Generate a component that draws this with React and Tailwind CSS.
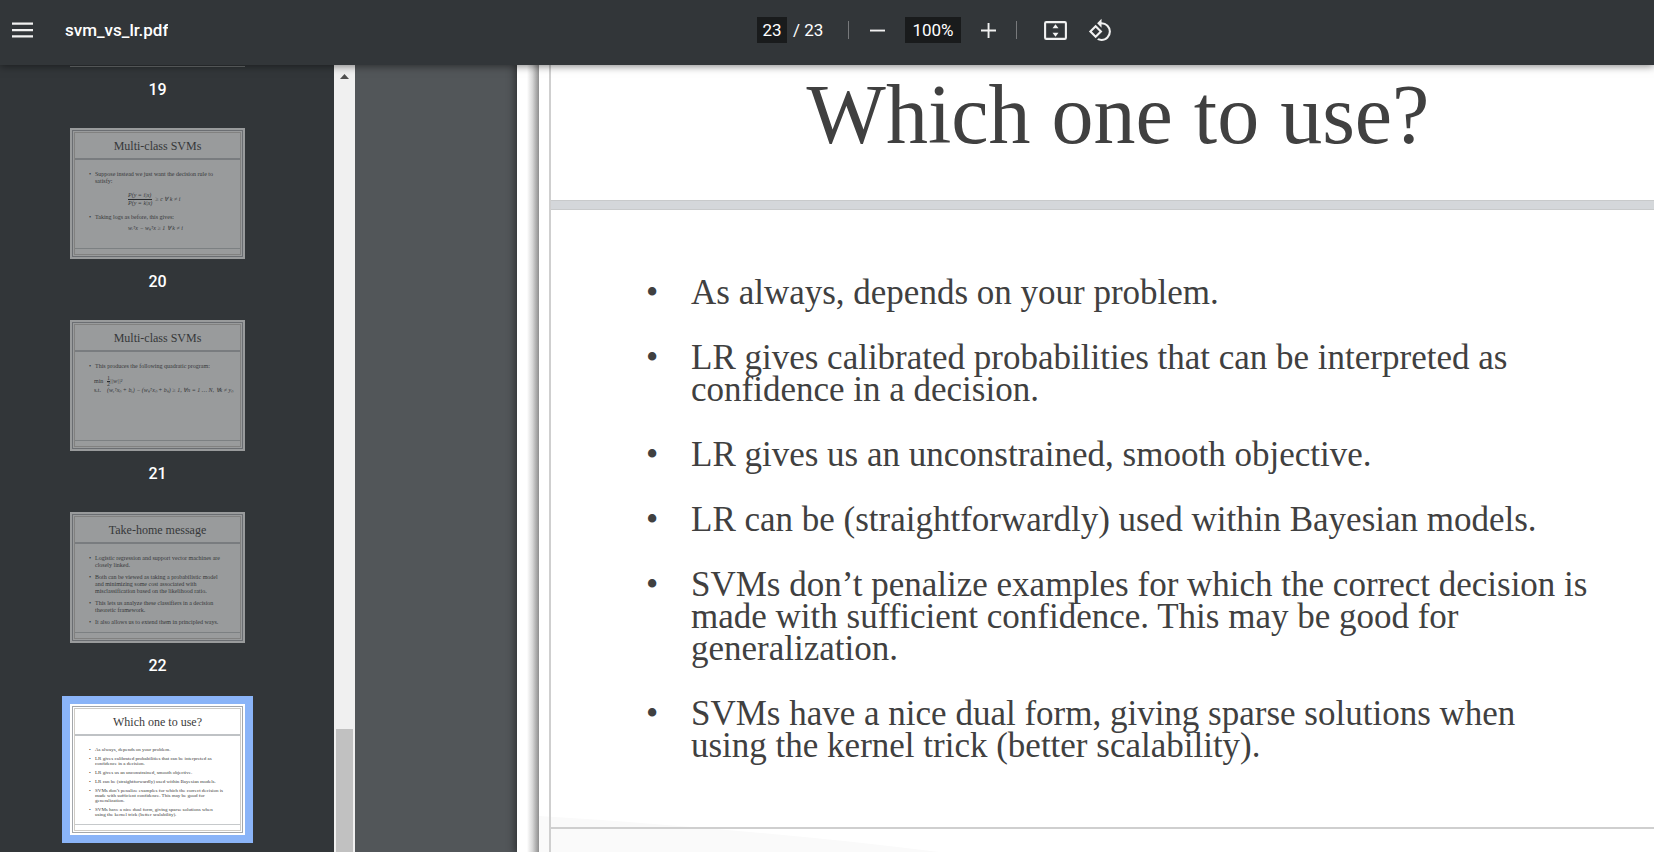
import React from "react";

const serif = "font-['Liberation_Serif',serif]";

function ToolButton({ label, children, className = "" }) {
  return (
    <button type="button" aria-label={label} className={`flex items-center justify-center text-[#f1f1f1] ${className}`}>
      {children}
    </button>
  );
}

function Separator() {
  return <span className="h-[18px] w-px shrink-0 bg-[#77797b]" />;
}

function Toolbar() {
  return (
    <header className="relative z-10 flex h-[65px] shrink-0 items-center bg-[#323639] pb-[5px] font-[Roboto,sans-serif] text-white shadow-[0_1px_8px_rgba(0,0,0,0.5)]">
      <div className="flex w-[757px] min-w-0 items-center gap-8 pl-3">
        <ToolButton label="Toggle sidebar" className="h-6 w-[21px]">
          <svg width="21" height="16" viewBox="0 0 21 16" fill="currentColor">
            <path d="M0 0.5h21v2.3H0zM0 6.9h21v2.3H0zM0 13.2h21v2.3H0z" />
          </svg>
        </ToolButton>
        <h1 className="truncate text-[17px] leading-6 font-medium">svm_vs_lr.pdf</h1>
      </div>
      <div className="flex shrink-0 items-center text-[17px] leading-[26px]">
        <input aria-label="Page number" defaultValue="23" className="h-[26px] w-[30px] bg-[#191b1c] text-center outline-none" />
        <span className="ml-[6px] w-[55px]">/ 23</span>
        <Separator />
        <ToolButton label="Zoom out" className="ml-[21px] h-6 w-[15px]">
          <svg width="15" height="15" viewBox="0 0 15 15" fill="currentColor">
            <path d="M0 6.6h15v1.9H0z" />
          </svg>
        </ToolButton>
        <input aria-label="Zoom level" defaultValue="100%" className="ml-5 h-[26px] w-14 bg-[#191b1c] text-center outline-none" />
        <ToolButton label="Zoom in" className="ml-5 h-6 w-[15px]">
          <svg width="15" height="15" viewBox="0 0 15 15" fill="currentColor">
            <path d="M0 6.6h6.6V0h1.9v6.6H15v1.9H8.5V15H6.6V8.5H0z" />
          </svg>
        </ToolButton>
        <span className="ml-5 flex">
          <Separator />
        </span>
        <ToolButton label="Fit to page" className="ml-[27px] h-6 w-[23px]">
          <svg width="23" height="19" viewBox="0 0 23 19" fill="none">
            <rect x="1.1" y="1.1" width="20.8" height="16.8" rx="1.2" stroke="currentColor" strokeWidth="2.1" />
            <path d="M11.5 3.2l3 4h-6zM11.5 15.8l3-4h-6z" fill="currentColor" />
          </svg>
        </ToolButton>
        <ToolButton label="Rotate counterclockwise" className="ml-[21px] h-6 w-6">
          <svg width="25" height="25" viewBox="0 0 24 24" fill="currentColor" className="shrink-0">
            <path d="M7.34 6.41L.86 12.9l6.49 6.48 6.49-6.48-6.5-6.49zM3.69 12.9l3.66-3.66L11 12.9l-3.66 3.66-3.65-3.66zm15.67-6.26A8.95 8.95 0 0 0 13 4V.76L8.76 5 13 9.24V6c1.79 0 3.58.68 4.95 2.05a7.007 7.007 0 0 1 0 9.9 6.973 6.973 0 0 1-7.79 1.44l-1.49 1.49C10.02 21.62 11.51 22 13 22c2.3 0 4.61-.88 6.36-2.64a8.98 8.98 0 0 0 0-12.72z" />
          </svg>
        </ToolButton>
      </div>
    </header>
  );
}

function Lines({ lines }) {
  return lines.map((line) => (
    <span key={line} className="block whitespace-nowrap">
      {line}
    </span>
  ));
}

function MiniBullet({ lines }) {
  return (
    <li className="flex">
      <span className="w-[6px] shrink-0">•</span>
      <span>
        <Lines lines={lines} />
      </span>
    </li>
  );
}

function Thumbnail({ title, number, selected = false, children }) {
  return (
    <button type="button" aria-label={`Page ${number}`} className={`block text-left ${selected ? "shadow-[0_0_0_8px_#8ab4f8]" : "opacity-50"}`}>
      <div className={`h-[131px] w-[175px] bg-white p-[2px] text-[#3a3a3a] ${serif}`}>
        <div className="h-full border border-[#a4a7ab] p-px">
          <div className="flex h-full flex-col overflow-hidden border border-[#cfccc6]">
            <div className="flex h-[27px] shrink-0 items-center justify-center border-b-2 border-[#bfc2c5] text-[12px] leading-[14px]">{title}</div>
            <div className={`flex-1 pt-[11px] pl-[14px] ${selected ? "text-[5px]" : "text-[6px]"}`}>{children}</div>
            <div className="h-[6px] shrink-0 border-t border-[#c6c9cb]" />
          </div>
        </div>
      </div>
    </button>
  );
}

function PageLabel({ children }) {
  return <p className="mt-[13px] mb-7 font-[Roboto,sans-serif] text-[16px] leading-5 font-medium text-white">{children}</p>;
}

function Sidebar() {
  return (
    <nav aria-label="Page thumbnails" className="flex w-[334px] shrink-0 flex-col items-start overflow-hidden bg-[#323639] pl-[70px]">
      <div className="flex w-[175px] flex-col items-center">
        <div className="h-[2px] w-full shrink-0 border-b border-[#6b6e70]" />
        <PageLabel>19</PageLabel>
        <Thumbnail title="Multi-class SVMs" number="20">
          <ul className="leading-[7px]">
            <MiniBullet lines={["Suppose instead we just want the decision rule to", "satisfy:"]} />
            <li className="flex items-center py-[7px] pl-[39px] italic">
              <span>
                <span className="block border-b border-[#222]">P(y = i|x)</span>
                <span className="block">P(y = k|x)</span>
              </span>
              <span className="pl-[3px]">≥ c ∀ k ≠ i</span>
            </li>
            <MiniBullet lines={["Taking logs as before, this gives:"]} />
            <li className="pt-[4px] pl-[39px] italic">wᵢᵀx − wₖᵀx ≥ 1 ∀ k ≠ i</li>
          </ul>
        </Thumbnail>
        <PageLabel>20</PageLabel>
        <Thumbnail title="Multi-class SVMs" number="21">
          <ul className="leading-[7px]">
            <MiniBullet lines={["This produces the following quadratic program:"]} />
            <li className="flex items-center pt-[6px] pl-[5px]">
              <span className="w-[13px]">min</span>
              <span className="text-center leading-[5px]">
                <span className="block border-b border-[#222]">1</span>
                <span className="block">2</span>
              </span>
              <span className="italic">||w||²</span>
            </li>
            <li className="flex pl-[5px]">
              <span className="w-[13px]">s.t.</span>
              <span className="whitespace-nowrap italic">(wᵧᵀxₙ + bᵧ) − (wₖᵀxₙ + bₖ) ≥ 1, ∀n = 1 … N, ∀k ≠ yₙ</span>
            </li>
          </ul>
        </Thumbnail>
        <PageLabel>21</PageLabel>
        <Thumbnail title="Take-home message" number="22">
          <ul className="flex flex-col gap-[5px] leading-[7px]">
            <MiniBullet lines={["Logistic regression and support vector machines are", "closely linked."]} />
            <MiniBullet lines={["Both can be viewed as taking a probabilistic model", "and minimizing some cost associated with", "misclassification based on the likelihood ratio."]} />
            <MiniBullet lines={["This lets us analyze these classifiers in a decision", "theoretic framework."]} />
            <MiniBullet lines={["It also allows us to extend them in principled ways."]} />
          </ul>
        </Thumbnail>
        <PageLabel>22</PageLabel>
        <Thumbnail title="Which one to use?" number="23" selected>
          <ul className="flex flex-col gap-[4px] leading-[5px]">
            {bullets.map((lines) => (
              <MiniBullet key={lines[0]} lines={lines} />
            ))}
          </ul>
        </Thumbnail>
      </div>
    </nav>
  );
}

function Scrollbar() {
  return (
    <div className="flex w-[21px] shrink-0 flex-col items-center bg-[#f0f0f0]">
      <svg width="9" height="5" viewBox="0 0 9 5" className="mt-[9px] shrink-0" fill="#505050">
        <path d="M4.5 0L9 5H0z" />
      </svg>
      <div className="flex-[650]" />
      <div className="w-[17px] flex-[123] bg-[#c1c1c1]" />
    </div>
  );
}

const bullets = [
  ["As always, depends on your problem."],
  ["LR gives calibrated probabilities that can be interpreted as", "confidence in a decision."],
  ["LR gives us an unconstrained, smooth objective."],
  ["LR can be (straightforwardly) used within Bayesian models."],
  ["SVMs don’t penalize examples for which the correct decision is", "made with sufficient confidence. This may be good for", "generalization."],
  ["SVMs have a nice dual form, giving sparse solutions when", "using the kernel trick (better scalability)."],
];

function Slide() {
  return (
    <article className={`flex w-[1200px] shrink-0 bg-white text-[#404040] shadow-[0_0_8px_2px_rgba(0,0,0,0.45)] ${serif}`}>
      <div className="w-[22px] shrink-0 bg-linear-to-r from-white from-45% via-[#d8d8d8] via-70% to-[#8e8e8e]" />
      <div className="relative flex min-w-0 flex-1">
        <svg className="absolute bottom-0 left-0" width="400" height="36" viewBox="0 0 400 36" fill="#fafafa">
          <path d="M0 0C130 8 270 20 400 36H0z" />
        </svg>
        <div className="relative ml-[10px] flex min-w-0 flex-1 flex-col border-l-2 border-[#cfcfcf]">
          <h2 className="h-[135px] pt-2 pr-8 text-center text-[84px] leading-[84px]">Which one to use?</h2>
          <div className="h-[10px] shrink-0 border-y border-[#c8cacb] bg-[#d4d7da]" />
          <ul className="flex h-[617px] shrink-0 flex-col gap-[33px] pt-[67px] pl-[95px] text-[35px] leading-[32px]">
            {bullets.map((lines) => (
              <li key={lines[0]} className="flex">
                <span className="w-[45px] shrink-0">•</span>
                <span>
                  <Lines lines={lines} />
                </span>
              </li>
            ))}
          </ul>
          <div className="border-t-2 border-[#cfcfcf]" />
        </div>
      </div>
    </article>
  );
}

export default function App() {
  return (
    <div className="flex h-screen flex-col overflow-hidden bg-[#525659]">
      <Toolbar />
      <div className="flex min-h-0 flex-1">
        <Sidebar />
        <Scrollbar />
        <main className="flex min-w-0 flex-1 overflow-hidden pl-[162px]">
          <Slide />
        </main>
      </div>
    </div>
  );
}
